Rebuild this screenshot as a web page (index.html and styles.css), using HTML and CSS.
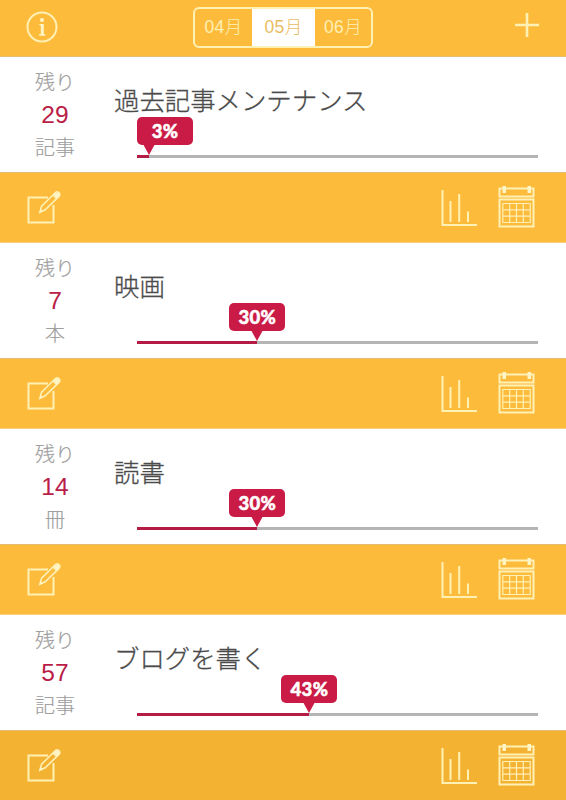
FILE: index.html
```html
<!DOCTYPE html>
<html lang="ja">
<head>
<meta charset="utf-8">
<title>目標</title>
<link rel="stylesheet" href="styles.css">
</head>
<body>
<svg width="0" height="0" class="defs" aria-hidden="true">
  <symbol id="edit" viewBox="0 0 34 34">
    <path d="M21 7.500H1.500v25h25V15" />
    <path class="pencil" d="M12.800 22.200l1.800-6L28.200 2.800a2.500 2.500 0 0 1 3.800 3.600L18.200 19.800zM26 5l3.700 3.800" />
    <path class="solid" d="M26.500 4.700l2-2 3.800.500-.300 3.500-2 2zM12.500 22.500l1-3.500 2.500 2.300z" />
  </symbol>
  <symbol id="chart" viewBox="0 0 36 38">
    <path d="M1.500 1v35H36M9.500 12v21M18.200 5v28M27 22.500v10.500" />
  </symbol>
  <symbol id="calendar" viewBox="0 0 37 43">
    <path d="M1.500 3.500h34v8h-34zM1.500 14.500h34v27h-34z" />
    <path class="fine" d="M4.800 18.500h27.400v19H4.800zM11.700 18.500v19M18.500 18.500v19M25.300 18.500v19M4.800 24.800h27.400M4.800 31.200h27.400" />
    <path class="solid" d="M4.500 1h3.500v7H4.500zM29.500 1H33v7h-3.500z" />
  </symbol>
</svg>
<header class="topbar">
  <svg class="info" viewBox="0 0 32 32"><circle cx="16" cy="16" r="14.500"/><circle class="solid" cx="16" cy="9" r="2.100"/><path class="solid" d="M13.300 13h4.500v10l1.500.500v1.200h-6.200v-1.200l1.700-.500v-8.500l-1.500-.400z"/></svg>
  <nav class="months"><span>04月</span><span class="active">05月</span><span>06月</span></nav>
  <svg class="plus" viewBox="0 0 24 24"><path d="M12 0v24M0 12h24"/></svg>
</header>
<main>
  <section class="goal">
    <div class="left"><span>残り</span><b>29</b><span>記事</span></div>
    <div class="body"><h2>過去記事メンテナンス</h2><div class="track"><div class="fill" style="width:3%"><div class="tip first">3%</div></div></div></div>
  </section>
  <div class="actions"><svg class="edit"><use href="#edit"/></svg><svg class="chart"><use href="#chart"/></svg><svg class="calendar"><use href="#calendar"/></svg></div>
  <section class="goal">
    <div class="left"><span>残り</span><b>7</b><span>本</span></div>
    <div class="body"><h2>映画</h2><div class="track"><div class="fill" style="width:30%"><div class="tip">30%</div></div></div></div>
  </section>
  <div class="actions"><svg class="edit"><use href="#edit"/></svg><svg class="chart"><use href="#chart"/></svg><svg class="calendar"><use href="#calendar"/></svg></div>
  <section class="goal">
    <div class="left"><span>残り</span><b>14</b><span>冊</span></div>
    <div class="body"><h2>読書</h2><div class="track"><div class="fill" style="width:30%"><div class="tip">30%</div></div></div></div>
  </section>
  <div class="actions"><svg class="edit"><use href="#edit"/></svg><svg class="chart"><use href="#chart"/></svg><svg class="calendar"><use href="#calendar"/></svg></div>
  <section class="goal">
    <div class="left"><span>残り</span><b>57</b><span>記事</span></div>
    <div class="body"><h2>ブログを書く</h2><div class="track"><div class="fill" style="width:43%"><div class="tip">43%</div></div></div></div>
  </section>
  <div class="actions last"><svg class="edit"><use href="#edit"/></svg><svg class="chart"><use href="#chart"/></svg><svg class="calendar"><use href="#calendar"/></svg></div>
</main>
</body>
</html>
```
FILE: styles.css
```css
* { box-sizing: border-box; }
body {
  margin: 0;
  width: 566px;
  height: 800px;
  overflow: hidden;
  background: #fff;
  font-family: "Liberation Sans", "Noto Sans CJK JP", sans-serif;
  font-weight: 300;
}
.defs { position: absolute; }
svg { fill: none; stroke: #fff0b4; stroke-width: 2; flex: none; }
.solid { fill: #fff4c4; stroke: none; }
.fine { stroke-width: 1.2; }
.pencil { stroke-width: 1.6; }
.topbar {
  height: 57px;
  background: #fdbb3c;
  border-bottom: 1px solid #e3bd74;
  display: flex;
  padding: 0 27px 0 26px;
}
.info { width: 32px; height: 32px; margin-top: 11px; }
.plus { width: 24px; height: 24px; margin: 13px 0 0 auto; stroke-width: 2.6; }
.months {
  width: 180px;
  height: 41px;
  margin: 7px 0 0 135px;
  border: 2px solid #fff0b4;
  border-radius: 6px;
  display: grid;
  grid-template-columns: 57px 63px 56px;
  font: 300 17.5px/37px "Liberation Sans", "Noto Sans CJK JP", sans-serif;
  color: #fff0b4;
  text-align: center;
  letter-spacing: .3px;
}
.months .active { background: #fff; color: #e9bd62; }
.goal { height: 115px; display: flex; }
.left {
  width: 110px;
  padding-top: 9px;
  display: flex;
  flex-direction: column;
  align-items: center;
  font: 300 20px/32px "Noto Sans CJK JP", sans-serif;
  color: #a0a0a0;
  -webkit-text-stroke: .2px;
}
.left b { font: 400 24.5px/34px "Liberation Sans", sans-serif; color: #b91d48; -webkit-text-stroke: 0; }
.left span:last-child { line-height: 29px; }
.body { flex: 1; padding: 24px 28px 0 4px; }
h2 {
  margin: 0;
  height: 74px;
  font: 300 25.4px/37px "Noto Sans CJK JP", sans-serif;
  color: #4b4b4b;
  -webkit-text-stroke: .3px;
}
.track { height: 3px; margin-left: 23px; background: #b5b5b5; }
.fill { height: 3px; background: #b51c45; position: relative; }
.tip {
  position: absolute;
  right: -28px;
  bottom: 13px;
  width: 56px;
  height: 28px;
  border-radius: 5px;
  background: #ca1a46;
  color: #fff;
  font: 900 18.5px/28px Lato, sans-serif;
  letter-spacing: .3px;
  -webkit-text-stroke: .5px;
  text-align: center;
}
.tip::after {
  content: "";
  position: absolute;
  left: 22px;
  top: 27px;
  border: 6px solid transparent;
  border-top: 11px solid #ca1a46;
  border-bottom: 0;
}
.tip.first { right: auto; left: 0; }
.tip.first::after { left: 6px; }
.actions {
  height: 71px;
  background: #fdbb3c;
  border-top: 1px solid #e3bd74;
  border-bottom: 1px solid #f8cf7d;
  display: flex;
  padding: 0 31px 0 26px;
}
.actions.last { background: #f4b233; }
.edit { width: 34px; height: 34px; margin: 17px 0 0 .5px; }
.chart { width: 36px; height: 38px; margin: 16px 21px 0 auto; }
.calendar { width: 37px; height: 43px; margin-top: 12px; }
```
